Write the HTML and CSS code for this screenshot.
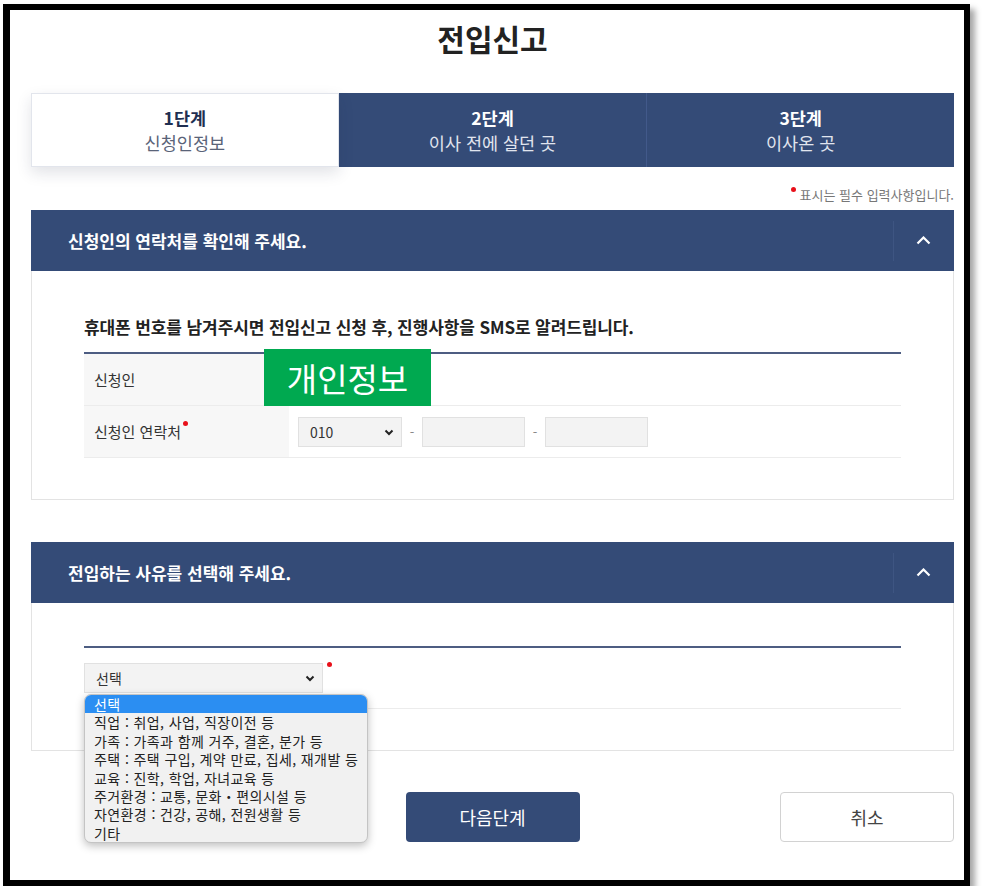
FILE: index.html
```html
<!DOCTYPE html>
<html lang="ko">
<head>
    <meta charset="UTF-8">
    <meta name="viewport" content="width=device-width, initial-scale=1.0">
    <title>전입신고</title>
    <link rel="stylesheet" href="styles.css">
</head>
<body>
    <div class="frame">
        <h1 class="page-title">전입신고</h1>

        <ol class="steps">
            <li class="step active"><strong>1단계</strong><span>신청인정보</span></li>
            <li class="step"><strong>2단계</strong><span>이사 전에 살던 곳</span></li>
            <li class="step"><strong>3단계</strong><span>이사온 곳</span></li>
        </ol>

        <p class="req-note"><i class="req-dot"></i>표시는 필수 입력사항입니다.</p>

        <!-- 신청인 연락처 -->
        <section class="panel">
            <div class="panel-head">
                <h2>신청인의 연락처를 확인해 주세요.</h2>
                <button class="panel-toggle" type="button">
                    <svg width="15" height="9" viewBox="0 0 15 9"><polyline points="1.5,7.5 7.5,1.5 13.5,7.5" fill="none" stroke="#fff" stroke-width="2.2"/></svg>
                </button>
            </div>
            <div class="panel-body">
                <p class="panel-desc">휴대폰 번호를 남겨주시면 전입신고 신청 후, 진행사항을 SMS로 알려드립니다.</p>
                <table class="form-table">
                    <tr>
                        <th>신청인</th>
                        <td></td>
                    </tr>
                    <tr>
                        <th>신청인 연락처<i class="req-dot"></i></th>
                        <td>
                            <div class="phone">
                                <span class="select-wrap phone-first">
                                    <select><option>010</option></select>
                                    <svg class="select-arrow" width="10" height="7" viewBox="0 0 10 7"><polyline points="1.5,1.5 5,5 8.5,1.5" fill="none" stroke="#222" stroke-width="2"/></svg>
                                </span>
                                <span class="dash">-</span>
                                <input type="text" class="phone-input">
                                <span class="dash">-</span>
                                <input type="text" class="phone-input">
                            </div>
                        </td>
                    </tr>
                </table>
                <div class="privacy-mask">개인정보</div>
            </div>
        </section>

        <!-- 전입 사유 -->
        <section class="panel panel-reason">
            <div class="panel-head">
                <h2>전입하는 사유를 선택해 주세요.</h2>
                <button class="panel-toggle" type="button">
                    <svg width="15" height="9" viewBox="0 0 15 9"><polyline points="1.5,7.5 7.5,1.5 13.5,7.5" fill="none" stroke="#fff" stroke-width="2.2"/></svg>
                </button>
            </div>
            <div class="panel-body">
                <div class="reason-row">
                    <span class="select-wrap reason-select">
                        <select><option>선택</option></select>
                        <svg class="select-arrow" width="10" height="7" viewBox="0 0 10 7"><polyline points="1.5,1.5 5,5 8.5,1.5" fill="none" stroke="#222" stroke-width="2"/></svg>
                        <ul class="option-list">
                            <li class="selected">선택</li>
                            <li>직업 : 취업, 사업, 직장이전 등</li>
                            <li>가족 : 가족과 함께 거주, 결혼, 분가 등</li>
                            <li>주택 : 주택 구입, 계약 만료, 집세, 재개발 등</li>
                            <li>교육 : 진학, 학업, 자녀교육 등</li>
                            <li>주거환경 : 교통, 문화・편의시설 등</li>
                            <li>자연환경 : 건강, 공해, 전원생활 등</li>
                            <li>기타</li>
                        </ul>
                    </span>
                    <i class="req-dot"></i>
                </div>
            </div>
        </section>

        <div class="actions">
            <button class="btn btn-next" type="button">다음단계</button>
            <button class="btn btn-cancel" type="button">취소</button>
        </div>
    </div>
</body>
</html>
```

FILE: styles.css
```css
body {
    margin: 0;
    background-color: #fff;
    font-family: 'Noto Sans CJK KR', 'Noto Sans', sans-serif;
    color: #222;
}
.frame {
    box-sizing: border-box;
    width: 967px;
    height: 882px;
    margin: 4px 0 0 3px;
    padding: 0 10px 0 21px;
    border-style: solid;
    border-color: #000;
    border-width: 6px 6px 6px 7px;
    box-shadow: 5px 5px 6px rgba(0, 0, 0, 0.35);
    background-color: #fff;
}
.page-title {
    margin: 0;
    padding-top: 8px;
    font-size: 30px;
    line-height: 40px;
    font-weight: bold;
    text-align: center;
    color: #222;
}

/* steps */
.steps {
    list-style: none;
    margin: 35px 0 0;
    padding: 0;
    display: grid;
    grid-template-columns: repeat(3, 1fr);
    height: 74px;
}
.step {
    display: flex;
    flex-direction: column;
    justify-content: center;
    align-items: center;
    background-color: #344b77;
    color: #fff;
    font-size: 17.5px;
    line-height: 25px;
}
.step + .step + .step {
    border-left: 1px solid #42598a;
}
.step strong {
    font-weight: bold;
}
.step span {
    color: #e1e5ee;
}
.step.active {
    position: relative;
    z-index: 1;
    background-color: #fff;
    border: 1px solid #e2e5ec;
    box-shadow: 0 6px 14px rgba(30, 40, 70, 0.13);
    color: #1f2f52;
}
.step.active span {
    color: #5a6378;
}

.req-note {
    margin: 20px 0 0;
    text-align: right;
    font-size: 13px;
    line-height: 16px;
    color: #777;
}
.req-dot {
    display: inline-block;
    width: 5px;
    height: 5px;
    border-radius: 50%;
    background-color: #e8101a;
    vertical-align: top;
    margin: 0 4px 0 2px;
}
.req-note .req-dot {
    margin: 0 4px 0 0;
}

/* panels */
.panel {
    margin-top: 7px;
}
.panel-reason {
    margin-top: 42px;
}
.panel-head {
    display: flex;
    align-items: center;
    height: 61px;
    background-color: #344b77;
    color: #fff;
}
.panel-head h2 {
    flex: 1;
    margin: 0;
    padding-left: 37px;
    font-size: 17px;
    font-weight: bold;
}
.panel-toggle {
    position: relative;
    width: 61px;
    height: 61px;
    padding: 0;
    border: none;
    background: none;
    display: flex;
    align-items: center;
    justify-content: center;
    cursor: pointer;
}
.panel-toggle::before {
    content: '';
    position: absolute;
    left: 0;
    top: 11px;
    bottom: 10px;
    border-left: 1px solid #3e5582;
}
.panel-body {
    position: relative;
    padding: 44px 52px 41px;
    border: 1px solid #e3e3e3;
    border-top: none;
}
.panel-desc {
    margin: 0 0 13px;
    font-size: 17px;
    line-height: 24px;
    font-weight: bold;
    letter-spacing: -0.1px;
    color: #222;
}

/* form table */
.form-table {
    width: 100%;
    border-collapse: collapse;
    border-top: 2px solid #4d5d82;
}
.form-table th,
.form-table td {
    height: 51px;
    padding: 0;
    border-bottom: 1px solid #ececec;
}
.form-table th {
    width: 195px;
    padding-left: 10px;
    text-align: left;
    font-size: 15px;
    font-weight: normal;
    color: #333;
    background-color: #f7f7f7;
}
.form-table td {
    padding-left: 9px;
}
.phone {
    display: flex;
    align-items: center;
}
.dash {
    width: 20px;
    text-align: center;
    color: #888;
    font-size: 13px;
}
.select-wrap {
    position: relative;
    display: inline-block;
}
.select-wrap select {
    appearance: none;
    -webkit-appearance: none;
    box-sizing: border-box;
    width: 100%;
    height: 30px;
    padding: 0 10px 0 11px;
    border: 1px solid #e1e1e1;
    background-color: #f3f3f3;
    font-family: inherit;
    font-size: 14px;
    color: #333;
}
.select-arrow {
    position: absolute;
    right: 8px;
    top: 12px;
    pointer-events: none;
}
.phone-first {
    width: 104px;
}
.phone-input {
    box-sizing: border-box;
    width: 103px;
    height: 30px;
    border: 1px solid #e1e1e1;
    background-color: #f3f3f3;
}
.privacy-mask {
    position: absolute;
    left: 232px;
    top: 78px;
    width: 167px;
    height: 57px;
    display: flex;
    align-items: center;
    justify-content: center;
    background-color: #00a950;
    color: #fff;
    font-size: 33px;
}

/* reason */
.panel-reason .panel-body {
    padding-top: 43px;
}
.reason-row {
    display: flex;
    align-items: center;
    height: 60px;
    border-top: 2px solid #4d5d82;
    border-bottom: 1px solid #ececec;
}
.reason-select {
    width: 239px;
}
.reason-row > .req-dot {
    align-self: flex-start;
    margin: 14px 0 0 4px;
}
.option-list {
    position: absolute;
    left: 0;
    top: 31px;
    z-index: 5;
    width: 282px;
    margin: 0;
    padding: 0;
    list-style: none;
    background-color: #f1f1f1;
    border: 1px solid #c4c4c4;
    border-radius: 7px;
    box-shadow: 0 3px 8px rgba(0, 0, 0, 0.25);
    overflow: hidden;
}
.option-list li {
    padding: 0 9px;
    font-size: 14px;
    line-height: 18.4px;
    letter-spacing: 0.4px;
    color: #222;
    white-space: nowrap;
}
.option-list li.selected {
    background-color: #2b8ef2;
    color: #fff;
}

/* buttons */
.actions {
    display: grid;
    grid-template-columns: 1fr auto 1fr;
    margin-top: 41px;
}
.btn {
    width: 174px;
    height: 50px;
    border-radius: 4px;
    font-family: inherit;
    font-size: 18px;
    cursor: pointer;
}
.btn-next {
    grid-column: 2;
    border: none;
    background-color: #344b77;
    color: #fff;
}
.btn-cancel {
    grid-column: 3;
    justify-self: end;
    border: 1px solid #d2d2d2;
    background-color: #fff;
    color: #444;
}
```
